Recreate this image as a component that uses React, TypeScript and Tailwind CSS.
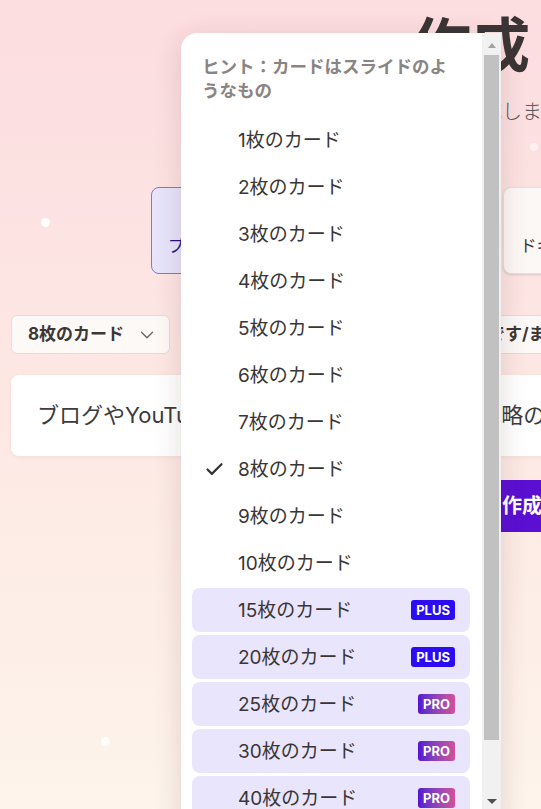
import { Check, ChevronDown } from "lucide-react";

const FONT = { fontFamily: "Inter, 'Noto Sans CJK JP', sans-serif" };

interface CardOption {
    count: number
    tier?: "PLUS" | "PRO"
}

const options: CardOption[] = [
    { count: 1 }, { count: 2 }, { count: 3 }, { count: 4 }, { count: 5 },
    { count: 6 }, { count: 7 }, { count: 8 }, { count: 9 }, { count: 10 },
    { count: 15, tier: "PLUS" },
    { count: 20, tier: "PLUS" },
    { count: 25, tier: "PRO" },
    { count: 30, tier: "PRO" },
    { count: 40, tier: "PRO" },
];

function TierBadge({ tier }: { tier: "PLUS" | "PRO" }) {
    if (tier === "PLUS") {
        return (
            <span className="h-[20px] px-[5px] flex items-center rounded-[3px] bg-[#2c0cf2] text-white text-[13px] font-bold leading-none">
                PLUS
            </span>
        )
    }
    return (
        <span className="h-[20px] px-[5px] flex items-center rounded-[3px] bg-linear-to-r from-[#560fd2] to-[#d2509a] text-white text-[13px] font-bold leading-none">
            PRO
        </span>
    )
}

function CountMenu({ selected }: { selected: number }) {
    return (
        <div className="absolute left-[181px] top-[33px] w-[320px] h-[800px] bg-white rounded-tl-2xl shadow-[0_6px_28px_rgba(80,40,30,0.16)] flex overflow-hidden">
            <div className="flex-1 flex flex-col pl-[11px] pr-[12px] pt-[11px]">
                <div className="px-[10px] pt-[11px] pb-[15px] text-[17.5px] leading-[24px] font-bold text-[#8a8483]">
                    ヒント：カードはスライドのようなもの
                </div>
                {options.map((o) => (
                    <div
                        key={o.count}
                        className={
                            "h-[44px] mb-[3px] shrink-0 flex items-center pl-3 pr-[15px] rounded-lg " +
                            (o.tier ? "bg-[#e9e5fd]" : "")
                        }
                    >
                        <span className="w-[22px] mr-3 flex items-center">
                            {o.count === selected && <Check size={21} strokeWidth={2.5} color="#333" />}
                        </span>
                        <span className="flex-1 pt-[2px] text-[19px] text-[#3a3636]">
                            {o.count}枚のカード
                        </span>
                        {o.tier && <TierBadge tier={o.tier} />}
                    </div>
                ))}
            </div>
            <div className="w-[19px] bg-[#f1f1f1] flex flex-col items-center shrink-0">
                <div className="h-[22px] flex items-center justify-center pt-[2px]">
                    <div className="w-0 h-0 border-l-[4px] border-r-[4px] border-b-[5px] border-l-transparent border-r-transparent border-b-[#a3a3a3]" />
                </div>
                <div className="w-[15px] h-[685px] bg-[#c1c1c1]" />
                <div className="h-[59px]" />
                <div className="w-0 h-0 border-l-[5px] border-r-[5px] border-t-[5px] border-l-transparent border-r-transparent border-t-[#505050]" />
            </div>
        </div>
    )
}

export default function App() {
    return (
        <div
            className="relative w-[541px] h-[809px] overflow-hidden bg-linear-to-b from-[#fcdde0] via-[#fde8e4] to-[#fdf4eb]"
            style={FONT}
        >
            <div className="w-[800px] flex flex-col px-[11px]">
                <h1 className="pt-[16px] pl-[401px] text-[59px] leading-none font-bold text-[#3b3535]">
                    作成
                </h1>
                <p className="mt-[23px] pl-[411px] text-[20px] leading-[28px] font-light text-[#555]">
                    何を作成しましょうか？
                </p>

                <div className="mt-[61px] pl-[140px] flex gap-3">
                    <div className="w-[164px] h-[87px] rounded-lg border border-[#8b70dd] bg-[#e7e4fb] flex items-end pl-4 pb-[14px] overflow-hidden">
                        <span className="text-[16.5px] text-[#23128a] whitespace-nowrap">プレゼンテーション</span>
                    </div>
                    <div className="w-[164px] h-[87px] rounded-lg border border-[#e6dfdc] bg-[#fcf8f6] flex items-end pl-4 pb-[14px] overflow-hidden">
                        <span className="text-[16.5px] text-[#3a3636] whitespace-nowrap">ウェブページ</span>
                    </div>
                    <div className="w-[164px] h-[87px] rounded-lg border border-[#e6dfdc] bg-[#fcf8f6] shadow-sm flex items-end pl-4 pb-[14px] overflow-hidden">
                        <span className="text-[16.5px] text-[#3a3636] whitespace-nowrap">ドキュメント</span>
                    </div>
                </div>

                <div className="mt-[41px] h-[39px] flex gap-3">
                    <div className="w-[159px] rounded-md border border-[#e3dcda] bg-[#fdf9f7] flex items-center pl-4 pr-[10px] gap-3">
                        <span className="text-[17px] font-bold text-[#3c3836]">8枚のカード</span>
                        <ChevronDown size={22} strokeWidth={1.5} color="#666" />
                    </div>
                    <div className="w-[277px] rounded-md border border-[#e3dcda] bg-[#fdf9f7]" />
                    <div className="w-[200px] rounded-md border border-[#e3dcda] bg-[#fdf9f7] flex items-center pl-4">
                        <span className="text-[17px] font-bold text-[#3c3836]">です/ます調</span>
                    </div>
                </div>

                <div className="mt-[21px] h-[81px] rounded-lg bg-white shadow-[0_1px_4px_rgba(120,80,60,0.08)] flex items-center pl-[26px]">
                    <span className="text-[22px] text-[#3d3b3b] whitespace-nowrap">
                        ブログやYouTube動画、会議のメモ、マーケ戦略の立案
                    </span>
                </div>

                <div className="mt-[24px] h-[52px] ml-[360px] w-[260px] rounded-md bg-[#5a0fd3] flex items-center pl-[131px]">
                    <span className="text-[20px] font-bold text-white">作成する</span>
                </div>
            </div>

            <div className="absolute left-[41px] top-[218px] w-[9px] h-[9px] rounded-full bg-white/90" />
            <div className="absolute left-[101px] top-[737px] w-[9px] h-[9px] rounded-full bg-white/80 blur-[0.5px]" />
            <div className="absolute left-[530px] top-[143px] w-[8px] h-[8px] rounded-full bg-white/50" />

            <CountMenu selected={8} />
        </div>
    )
}
